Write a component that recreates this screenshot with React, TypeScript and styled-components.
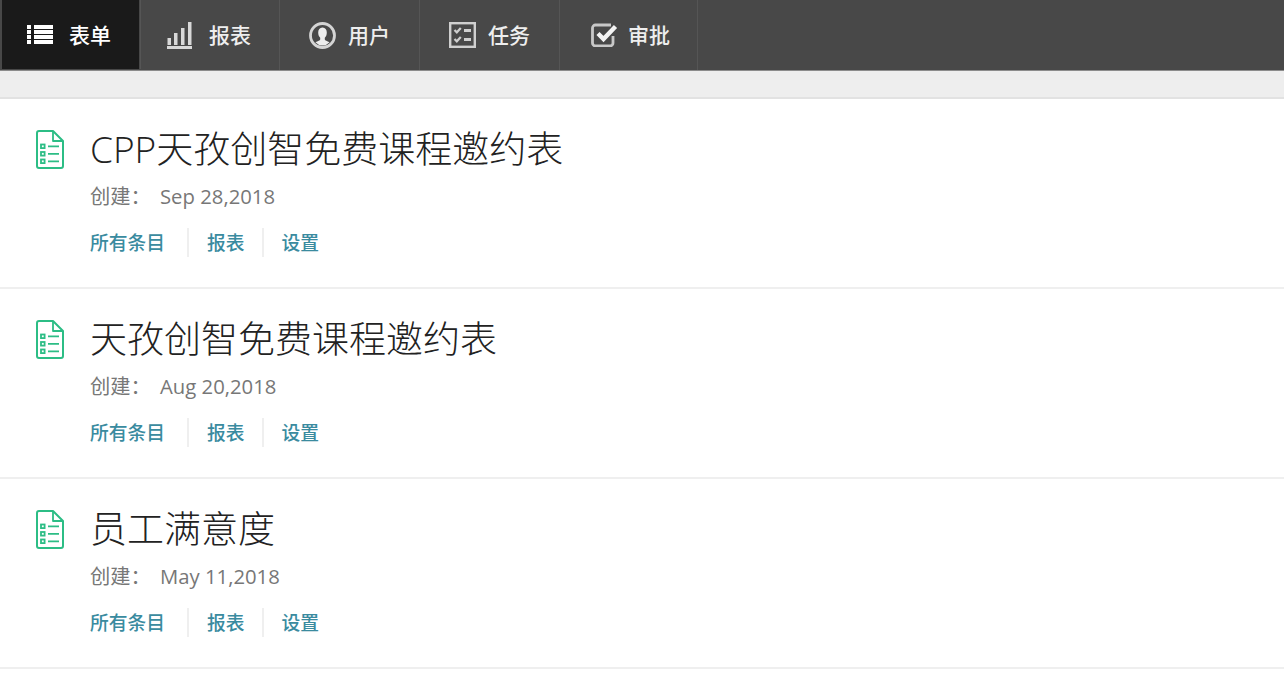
import React from "react";
import styled, { createGlobalStyle } from "styled-components";

const GlobalStyle = createGlobalStyle`
  html, body {
    margin: 0;
    padding: 0;
    background: #fff;
    font-family: "Open Sans", "Noto Sans CJK SC", sans-serif;
  }
`;

const Page = styled.div`
  width: 1284px;
  height: 673px;
  overflow: hidden;
`;

const Nav = styled.nav`
  display: flex;
  height: 70px;
  background: #484848;
  border-bottom: 1px solid #8c8c8c;
`;

const NavItem = styled.a<{ $active?: boolean; $width: number; $pad: number; $gap: number }>`
  display: flex;
  align-items: center;
  box-sizing: border-box;
  width: ${p => p.$width}px;
  height: ${p => (p.$active ? 69 : 70)}px;
  gap: ${p => p.$gap}px;
  padding-left: ${p => p.$pad}px;
  color: ${p => (p.$active ? "#fff" : "#eeeeee")};
  font-size: 21px;
  font-weight: 500;
  white-space: nowrap;
  ${p =>
    p.$active
      ? `
    margin: 0 1px 0 2px;
    background: #1a1a1a;
    box-shadow: 1px 0 0 #484848, 2px 0 0 #555555;
  `
      : `
    border-right: 1px solid #555555;
  `}

  svg {
    flex: none;
  }
`;

const NavLabel = styled.span`
  margin-bottom: 2px;
`;

const Band = styled.div`
  height: 26px;
  background: #eeeeee;
  border-bottom: 2px solid #e2e2e2;
`;

const Row = styled.section`
  display: flex;
  box-sizing: border-box;
  height: 190px;
  padding: 29px 0 0 36px;
  border-bottom: 2px solid #efefef;
`;

const FormIcon = styled.svg`
  flex: none;
  margin-top: 2px;
`;

const Body = styled.div`
  display: flex;
  flex-direction: column;
  margin-left: 26px;
`;

const Title = styled.h2`
  margin: 0;
  font-size: 37px;
  line-height: 42px;
  font-weight: 300;
  color: #222;
`;

const Created = styled.div`
  display: flex;
  margin-top: 12px;
  font-size: 20.3px;
  line-height: 28px;
  color: #777777;
`;

const CreatedLabel = styled.span`
  width: 70px;
`;

const Links = styled.div`
  display: flex;
  margin-top: 18px;
`;

const LinkItem = styled.a<{ $first?: boolean }>`
  box-sizing: border-box;
  height: 29px;
  padding: ${p => (p.$first ? "0 22px 0 0" : "0 17px 0 18px")};
  line-height: 30px;
  font-size: 18.75px;
  font-weight: 500;
  color: #3a8b9f;
  border-right: 2px solid #efefef;

  &:last-child {
    border-right: none;
  }
`;

function ListIcon() {
  return (
    <svg width="26" height="19" viewBox="0 0 26 19" fill="#fff">
      <rect x="0" y="0" width="4" height="4" />
      <rect x="0" y="5" width="4" height="4" />
      <rect x="0" y="10" width="4" height="4" />
      <rect x="0" y="15" width="4" height="4" />
      <rect x="7" y="0" width="19" height="4" />
      <rect x="7" y="5" width="19" height="4" />
      <rect x="7" y="10" width="19" height="4" />
      <rect x="7" y="15" width="19" height="4" />
    </svg>
  );
}

function BarsIcon() {
  return (
    <svg width="25" height="27" viewBox="0 0 25 27" fill="#d8d8d8">
      <rect x="0.500" y="16" width="3.500" height="7" />
      <rect x="7" y="11" width="3.500" height="12" />
      <rect x="14" y="6" width="3.500" height="17" />
      <rect x="21" y="0" width="3.500" height="23" />
      <rect x="0" y="24" width="25" height="3" />
    </svg>
  );
}

function UserIcon() {
  return (
    <svg width="27" height="27" viewBox="0 0 27 27">
      <circle cx="13.500" cy="13.500" r="12" fill="none" stroke="#d4d4d4" strokeWidth="2.800" />
      <path
        d="M13.500 5.500c2.800 0 4.300 2.200 4.300 5 0 2.400-.8 4.200-2 5.300v1.700c0 1 2.400 1.500 4.800 2.700a10 10 0 0 1-7.100 3.300 10 10 0 0 1-7.100-3.300c2.400-1.200 4.800-1.700 4.800-2.700v-1.700c-1.200-1.100-2-2.900-2-5.300 0-2.800 1.500-5 4.300-5z"
        fill="#ececec"
      />
    </svg>
  );
}

function TaskIcon() {
  return (
    <svg width="27" height="26" viewBox="0 0 27 26" fill="none" stroke="#cfcfcf">
      <rect x="1.200" y="1.200" width="24.600" height="23.600" strokeWidth="2.400" />
      <path d="M5.500 8l2.300 2.300 4-4.300M5.500 17l2.300 2.300 4-4.300" strokeWidth="2.200" />
      <path d="M15 8.500h7M15 17.500h7" strokeWidth="3" />
    </svg>
  );
}

function CheckIcon() {
  return (
    <svg width="27" height="24" viewBox="0 0 27 24" fill="none">
      <path
        d="M22 13v7a3 3 0 0 1-3 3H4.500a3 3 0 0 1-3-3V5a3 3 0 0 1 3-3H20"
        stroke="#c8c8c8"
        strokeWidth="2.800"
      />
      <path d="M7 10.500l5.500 5.500L24.500 3.500" stroke="#f4f4f4" strokeWidth="4.400" />
    </svg>
  );
}

function FormGlyph() {
  return (
    <FormIcon width="28" height="39" viewBox="0 0 28 39" fill="none" stroke="#2cbd85">
      <path
        d="M3 1h14l10 10v25a2 2 0 0 1-2 2H3a2 2 0 0 1-2-2V3a2 2 0 0 1 2-2z"
        strokeWidth="2"
        strokeLinejoin="round"
      />
      <path d="M17 1v10h10" strokeWidth="1.800" strokeLinejoin="round" />
      <rect x="5" y="14.500" width="3.600" height="3.600" strokeWidth="1.800" />
      <rect x="5" y="22" width="3.600" height="3.600" strokeWidth="1.800" />
      <rect x="5" y="29.500" width="3.600" height="3.600" strokeWidth="1.800" />
      <path d="M12 16.300h11M12 23.800h11M12 31.300h11" strokeWidth="1.800" />
    </FormIcon>
  );
}

const navItems = [
  { label: "表单", icon: <ListIcon />, width: 137, pad: 25, gap: 16, active: true },
  { label: "报表", icon: <BarsIcon />, width: 140, pad: 27, gap: 17 },
  { label: "用户", icon: <UserIcon />, width: 140, pad: 29, gap: 12 },
  { label: "任务", icon: <TaskIcon />, width: 140, pad: 29, gap: 12 },
  { label: "审批", icon: <CheckIcon />, width: 138, pad: 31, gap: 10 }
];

const forms = [
  { title: "CPP天孜创智免费课程邀约表", date: "Sep 28,2018" },
  { title: "天孜创智免费课程邀约表", date: "Aug 20,2018" },
  { title: "员工满意度", date: "May 11,2018" }
];

export default function App(): JSX.Element {
  return (
    <Page>
      <GlobalStyle />
      <Nav>
        {navItems.map(item => (
          <NavItem
            key={item.label}
            $active={item.active}
            $width={item.width}
            $pad={item.pad}
            $gap={item.gap}
          >
            {item.icon}
            <NavLabel>{item.label}</NavLabel>
          </NavItem>
        ))}
      </Nav>
      <Band />
      {forms.map(form => (
        <Row key={form.title}>
          <FormGlyph />
          <Body>
            <Title>{form.title}</Title>
            <Created>
              <CreatedLabel>创建：</CreatedLabel>
              {form.date}
            </Created>
            <Links>
              <LinkItem $first>所有条目</LinkItem>
              <LinkItem>报表</LinkItem>
              <LinkItem>设置</LinkItem>
            </Links>
          </Body>
        </Row>
      ))}
    </Page>
  );
}
